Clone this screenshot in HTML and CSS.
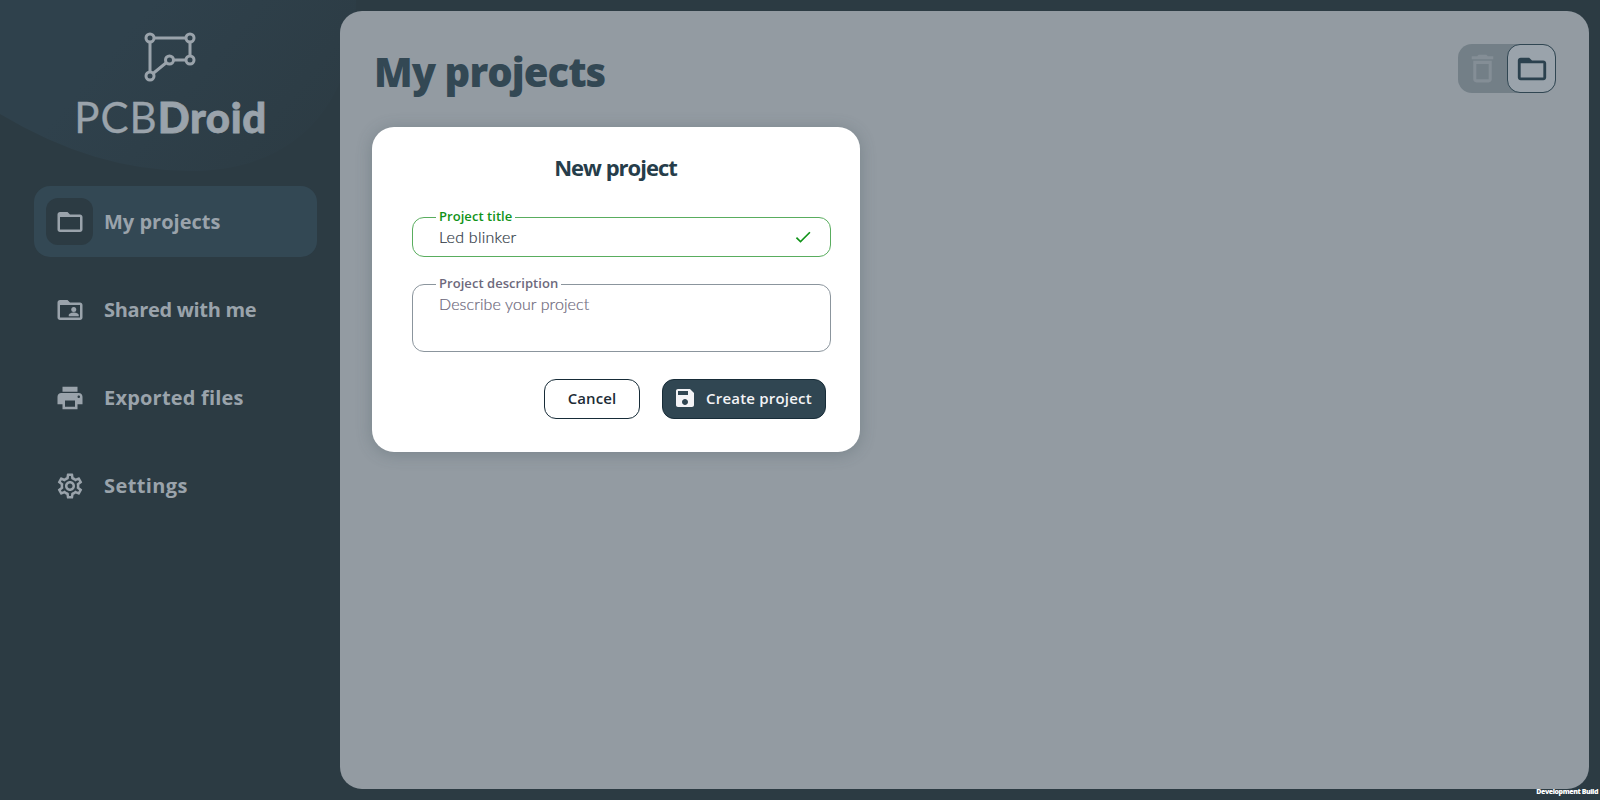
FILE: index.html
```
<!DOCTYPE html>
<html lang="en">
<head>
    <meta charset="UTF-8">
    <meta name="viewport" content="width=device-width, initial-scale=1.0">
    <title>PCBDroid - My projects</title>
    <link rel="stylesheet" href="styles.css">
</head>
<body>
    <svg class="backdrop" viewBox="0 0 400 180">
        <defs>
            <linearGradient id="glow" gradientUnits="userSpaceOnUse" x1="120" y1="40" x2="310" y2="200">
                <stop offset="0" stop-color="#2f414c"/>
                <stop offset="1" stop-color="#2c3b43"/>
            </linearGradient>
        </defs>
        <path d="M0 0V114Q95 171 190 171C300 171 355 100 356 0Z" fill="url(#glow)"/>
    </svg>

    <aside class="sidebar">
        <div class="logo">
            <svg class="logo-mark" viewBox="0 0 52 50">
                <path d="M6 6H46V28H25.500L6 44Z"/>
                <circle cx="6" cy="6" r="4"/>
                <circle cx="46" cy="6" r="4"/>
                <circle cx="46" cy="28" r="4"/>
                <circle cx="25.500" cy="28" r="4"/>
                <circle cx="6" cy="44" r="4"/>
            </svg>
            <div class="logo-text"><span class="logo-pcb">PCB</span><span class="logo-droid">Droid</span></div>
        </div>

        <nav class="menu">
            <a class="menu-item active">
                <span class="menu-icon"><svg viewBox="0 0 24 24"><path d="M20 6h-8l-2-2H4c-1.100 0-2 .9-2 2v12c0 1.100.9 2 2 2h16c1.100 0 2-.9 2-2V8c0-1.100-.9-2-2-2zm0 12H4V8h16v10z"/></svg></span>
                <span class="menu-label label-my">My projects</span>
            </a>
            <a class="menu-item">
                <span class="menu-icon"><svg viewBox="0 0 24 24"><path d="M20 6h-8l-2-2H4c-1.100 0-2 .9-2 2v12c0 1.100.9 2 2 2h16c1.100 0 2-.9 2-2V8c0-1.100-.9-2-2-2zm0 12H4V8h16v10z"/><circle cx="15" cy="11.500" r="2"/><path d="M11 17h8v-1c0-1.330-2.670-2-4-2s-4 .67-4 2v1z"/></svg></span>
                <span class="menu-label label-shared">Shared with me</span>
            </a>
            <a class="menu-item">
                <span class="menu-icon"><svg viewBox="0 0 24 24"><path d="M19 8H5c-1.660 0-3 1.340-3 3v6h4v4h12v-4h4v-6c0-1.660-1.340-3-3-3zm-3 11H8v-5h8v5zm3-7c-.55 0-1-.45-1-1s.45-1 1-1 1 .45 1 1-.45 1-1 1zm-1-9H6v4h12V3z"/></svg></span>
                <span class="menu-label label-exported">Exported files</span>
            </a>
            <a class="menu-item">
                <span class="menu-icon"><svg viewBox="0 0 24 24"><path d="M19.430 12.980c.04-.32.07-.64.07-.98 0-.34-.03-.66-.07-.98l2.110-1.650c.19-.15.24-.42.12-.64l-2-3.460c-.09-.16-.26-.25-.44-.25-.06 0-.12.010-.17.030l-2.490 1c-.52-.4-1.080-.73-1.690-.98l-.38-2.650C14.460 2.180 14.250 2 14 2h-4c-.25 0-.46.18-.49.42l-.38 2.650c-.61.25-1.170.59-1.690.98l-2.490-1c-.06-.02-.12-.03-.18-.03-.17 0-.34.09-.43.25l-2 3.460c-.13.22-.07.49.12.64l2.110 1.650c-.04.32-.07.65-.07.98 0 .33.030.66.070.98l-2.110 1.650c-.19.15-.24.42-.12.64l2 3.460c.09.16.26.25.44.25.06 0 .12-.01.17-.03l2.490-1c.52.4 1.080.73 1.690.98l.38 2.650c.030.24.24.42.49.42h4c.25 0 .46-.18.49-.42l.38-2.650c.61-.25 1.170-.59 1.690-.98l2.490 1c.06.020.12.030.18.030.17 0 .34-.09.43-.25l2-3.460c.12-.22.070-.49-.12-.64l-2.110-1.650zm-1.980-1.710c.040.31.050.52.050.73 0 .21-.02.43-.05.73l-.14 1.130.89.7 1.080.84-.7 1.210-1.270-.51-1.040-.42-.9.68c-.43.32-.84.56-1.250.73l-1.060.43-.16 1.130-.2 1.350h-1.400l-.19-1.350-.16-1.130-1.060-.43c-.43-.18-.83-.41-1.230-.71l-.91-.7-1.060.43-1.270.51-.7-1.210 1.080-.84.89-.7-.14-1.130c-.03-.31-.05-.54-.05-.74s.02-.43.050-.73l.14-1.130-.89-.7-1.080-.84.7-1.210 1.270.51 1.040.42.9-.68c.43-.32.84-.56 1.250-.73l1.060-.43.16-1.130.2-1.350h1.390l.19 1.350.16 1.130 1.060.43c.43.18.83.41 1.230.71l.91.7 1.060-.43 1.270-.51.7 1.210-1.070.85-.89.7.14 1.130zM12 8c-2.210 0-4 1.790-4 4s1.790 4 4 4 4-1.790 4-4-1.790-4-4-4zm0 6c-1.100 0-2-.9-2-2s.9-2 2-2 2 .9 2 2-.9 2-2 2z"/></svg></span>
                <span class="menu-label label-settings">Settings</span>
            </a>
        </nav>
    </aside>

    <main class="panel">
        <header class="panel-header">
            <h1>My projects</h1>
            <div class="view-toggle">
                <button class="toggle-btn trash"><svg viewBox="0 0 24 24"><path d="M6 19c0 1.100.9 2 2 2h8c1.100 0 2-.9 2-2V7H6v12zM8 9h8v10H8V9zm7.500-5l-1-1h-5l-1 1H5v2h14V4z"/></svg></button>
                <button class="toggle-btn selected"><svg viewBox="0 0 24 24"><path d="M20 6h-8l-2-2H4c-1.100 0-2 .9-2 2v12c0 1.100.9 2 2 2h16c1.100 0 2-.9 2-2V8c0-1.100-.9-2-2-2zm0 12H4V8h16v10z"/></svg></button>
            </div>
        </header>

        <section class="dialog">
            <h2>New project</h2>
            <div class="field valid">
                <label>Project title</label>
                <span class="field-value">Led blinker</span>
                <svg class="check" viewBox="0 0 24 24"><path d="M9 16.170L4.830 12l-1.420 1.410L9 19 21 7l-1.410-1.410z"/></svg>
            </div>
            <div class="field description">
                <label>Project description</label>
                <span class="field-value">Describe your project</span>
            </div>
            <div class="dialog-actions">
                <button class="btn btn-cancel">Cancel</button>
                <button class="btn btn-create">
                    <svg viewBox="0 0 24 24"><path d="M17 3H5c-1.110 0-2 .9-2 2v14c0 1.100.89 2 2 2h14c1.100 0 2-.9 2-2V7l-4-4zm-5 16c-1.660 0-3-1.340-3-3s1.340-3 3-3 3 1.340 3 3-1.340 3-3 3zm3-10H5V5h10v4z"/></svg>
                    <span>Create project</span>
                </button>
            </div>
        </section>
    </main>

    <div class="build-tag">Development Build</div>
</body>
</html>
```

FILE: styles.css
```
:root {
    --bg-color: #2c3b43;
    --active-color: #334854;
    --panel-color: #939ba2;
    --light-color: #9aa3ab;
    --primary-color: #304652;
    --valid-color: #109318;
    --hint-color: #6d697c;
}
* { margin: 0; padding: 0; box-sizing: border-box; }
body { width: 1600px; height: 800px; overflow: hidden; display: flex; background: var(--bg-color); font-family: 'Open Sans', sans-serif; }
button { font-family: inherit; border: none; background: none; }
svg { display: block; fill: currentColor; }

.backdrop { position: absolute; top: 0; left: 0; width: 400px; height: 180px; }

/* Sidebar */
.sidebar { position: relative; width: 340px; padding: 32px 23px 0 34px; color: var(--light-color); }
.logo { height: 154px; display: flex; flex-direction: column; align-items: center; }
.logo-mark { width: 52px; height: 50px; stroke: var(--light-color); stroke-width: 3; margin-right: 12px; }
.logo-mark path { fill: none; }
.logo-mark circle { fill: #2f414c; }
.logo-text { display: flex; font-family: 'Lato', sans-serif; font-size: 42px; line-height: 50px; margin-top: 10px; margin-right: 10px; white-space: nowrap; }
.logo-pcb { letter-spacing: 1px; -webkit-text-stroke: 0.3px var(--light-color); }
.logo-droid { font-weight: 900; letter-spacing: 0.6px; -webkit-text-stroke: 0.8px var(--light-color); }
.menu { display: flex; flex-direction: column; gap: 17px; }
.menu-item { height: 71px; display: flex; align-items: center; gap: 11px; padding: 0 12px; border-radius: 16px; }
.menu-item.active { background: var(--active-color); }
.menu-icon { width: 47px; height: 47px; display: flex; align-items: center; justify-content: center; border-radius: 12px; }
.menu-icon svg { width: 30px; height: 30px; }
.active .menu-icon { background: var(--bg-color); }
.menu-label { font-size: 20px; font-weight: 700; white-space: nowrap; }
.label-shared { letter-spacing: -0.32px; }
.label-exported { letter-spacing: 0.2px; }
.label-settings { letter-spacing: 0.4px; }

/* Main panel */
.panel { position: relative; width: 1249px; height: 778px; margin-top: 11px; padding: 33px 33px 0 32px; border-radius: 22px; background: var(--panel-color); }
.panel-header { height: 83px; display: flex; justify-content: space-between; align-items: flex-start; padding-left: 2px; }
h1 { font-size: 40px; line-height: 56px; font-weight: 800; letter-spacing: -0.95px; color: var(--active-color); white-space: nowrap; }
.view-toggle { display: flex; border-radius: 14px; background: #737f87; }
.toggle-btn { width: 49px; height: 49px; display: flex; align-items: center; justify-content: center; border-radius: 13px; }
.toggle-btn svg { width: 34px; height: 34px; }
.toggle-btn.trash { color: #848e96; }
.toggle-btn.trash svg { width: 37px; height: 37px; }
.selected { border: 1px solid #304652; background: var(--light-color); color: #2b414e; }

/* New project dialog */
.dialog { width: 488px; height: 325px; padding: 23px 29px 0 40px; border-radius: 22px; background: #fff; box-shadow: 0 2px 16px rgba(60, 80, 85, 0.3); }
h2 { font-size: 22px; line-height: 34px; font-weight: 700; letter-spacing: -1px; text-align: center; color: #263d4a; margin-right: 12px; }
.field { position: relative; display: flex; justify-content: space-between; width: 419px; height: 40px; margin-top: 33px; padding: 0 17px 0 26px; border: 1px solid #8b959d; border-radius: 12px; color: var(--hint-color); }
.field label { position: absolute; left: 23px; top: -12px; padding: 0 3px; font-size: 13px; line-height: 20px; font-weight: 600; letter-spacing: 0.05px; background: #fff; white-space: nowrap; }
.field-value { font-family: 'Lato', sans-serif; font-size: 16px; font-weight: 300; line-height: 37px; letter-spacing: 0.1px; -webkit-text-stroke: 0.2px currentColor; }
.field.valid { border-color: #59ad5e; }
.valid label, .check { color: var(--valid-color); }
.valid .field-value { color: #2f3945; letter-spacing: 0.25px; }
.check { width: 20px; height: 20px; margin-top: 9px; }
.description { height: 68px; margin-top: 27px; }
.dialog-actions { display: flex; justify-content: flex-end; gap: 22px; margin-top: 27px; padding-right: 5px; }
.btn { height: 40px; display: flex; align-items: center; justify-content: center; border: 1px solid #172c38; border-radius: 12px; font-size: 15px; font-weight: 600; line-height: 20px; padding-bottom: 2px; white-space: nowrap; }
.btn-cancel { width: 96px; background: #fff; color: #1c2b36; letter-spacing: 0.1px; }
.btn-create { width: 164px; gap: 9px; padding-right: 3px; background: var(--primary-color); color: #f3f3f6; letter-spacing: 0.2px; }
.btn-create svg { width: 24px; height: 24px; flex-shrink: 0; }

.build-tag { position: absolute; right: 2px; bottom: 3px; font-size: 7px; line-height: 11px; font-weight: 800; letter-spacing: -0.42px; color: #fff; }
```
